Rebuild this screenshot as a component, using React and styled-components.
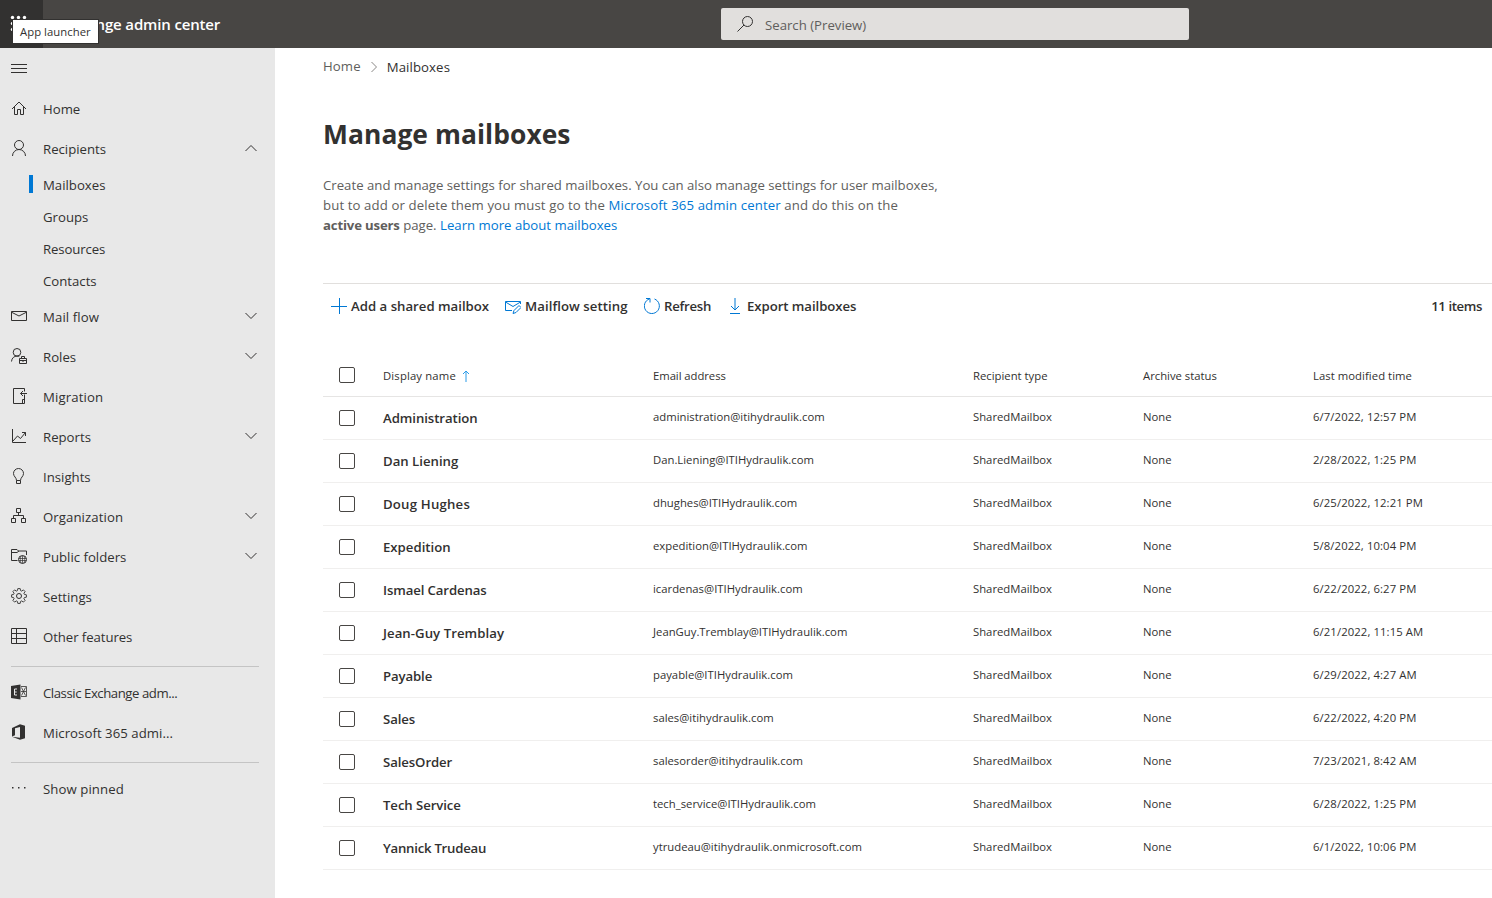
import React from "react";
import styled, { createGlobalStyle } from "styled-components";

const Global = createGlobalStyle`
  *, *::before, *::after { box-sizing: border-box; }
  html, body { margin: 0; padding: 0; background: #fff; }
  body { font-family: "Open Sans", "Noto Sans", sans-serif; font-size: 13.2px; color: #323130; overflow: hidden; }
  a { color: #0078d4; text-decoration: none; }
`;

const Page = styled.div`
  display: flex;
  flex-direction: column;
  width: 1492px;
  height: 898px;
`;

const Header = styled.header`
  position: relative;
  display: flex;
  flex: none;
  height: 48px;
  background: #484644;
`;

const Launcher = styled.div`
  width: 43px;
  height: 48px;
  background: #323130;
  svg { display: block; }
`;

const Brand = styled.div`
  width: 678px;
  padding-left: 11px;
  line-height: 49px;
  font-size: 15px;
  font-weight: 600;
  letter-spacing: -0.15px;
  color: #fff;
  white-space: nowrap;
`;

const Tooltip = styled.div`
  position: absolute;
  left: 12px;
  top: 19px;
  width: 87px;
  height: 25px;
  padding-left: 7px;
  border: 1px solid #323130;
  background: #fff;
  font-size: 11.3px;
  line-height: 24px;
  letter-spacing: 0.05px;
  white-space: nowrap;
  color: #323130;
`;

const Search = styled.div`
  display: flex;
  align-items: center;
  gap: 12px;
  width: 468px;
  height: 32px;
  margin-top: 8px;
  padding: 0 16px;
  border-radius: 2px;
  background: #e1dfdd;
  color: #605e5c;
  span { padding-top: 2px; }
`;

const Body = styled.div`
  display: flex;
  flex: 1;
  min-height: 0;
`;

const Sidebar = styled.nav`
  flex: none;
  width: 275px;
  background: #e8e8e8;
`;

const MenuToggle = styled.div`
  height: 41px;
  padding: 12px 11px;
  svg { display: block; }
`;

const NavRow = styled.div`
  display: flex;
  align-items: center;
  height: 40px;
  padding: 0 18px 0 11px;
  svg { display: block; flex: none; margin-top: -2px; }
`;

const NavLabel = styled.span`
  flex: 1;
  margin-left: 16px;
  white-space: nowrap;
  letter-spacing: ${(p) => p.$track || 0}px;
`;

const SubRow = styled.div`
  display: flex;
  align-items: center;
  height: 32px;
  padding-left: 29px;
  letter-spacing: ${(p) => p.$track || 0}px;
  &::before {
    content: "";
    width: 4px;
    height: 18px;
    margin: -2px 10px 0 0;
    background: ${(p) => (p.$active ? "#0078d4" : "transparent")};
  }
`;

const Divider = styled.div`
  height: 1px;
  margin: 9px 16px 6px 11px;
  background: #c4c4c4;
`;

const Main = styled.main`
  flex: 1;
  min-width: 0;
  padding-left: 48px;
`;

const Crumbs = styled.div`
  display: flex;
  align-items: center;
  gap: 9px;
  height: 38px;
  padding-bottom: 2px;
  color: #605e5c;
  letter-spacing: 0.1px;
  svg { display: block; margin-top: 2px; }
`;

const CurrentCrumb = styled.span`
  padding-top: 2px;
  color: #323130;
`;

const Title = styled.h1`
  margin: 28px 0 0;
  font-size: 26.4px;
  line-height: 40px;
  font-weight: 700;
  letter-spacing: 0.07px;
`;

const Intro = styled.p`
  margin: 21px 0 0;
  height: 108px;
  line-height: 20px;
  color: #605e5c;
  white-space: nowrap;
  b { font-weight: 700; letter-spacing: -0.17px; }
`;

const IntroLine = styled.span`
  display: block;
  letter-spacing: ${(p) => p.$track || 0}px;
`;

const Toolbar = styled.div`
  display: flex;
  align-items: center;
  height: 71px;
  padding: 0 10px 27px 8px;
  border-top: 1px solid #e1dfdd;
  font-weight: 600;
`;

const Command = styled.span`
  display: flex;
  align-items: center;
  gap: 4px;
  width: ${(p) => p.$w}px;
  white-space: nowrap;
  letter-spacing: ${(p) => p.$track || 0}px;
  svg { display: block; flex: none; }
`;

const Count = styled.span`
  margin-left: auto;
  letter-spacing: -0.4px;
`;

const Row = styled.div`
  display: grid;
  grid-template-columns: 60px 270px 320px 170px 170px 1fr;
  align-items: center;
  height: 43px;
  border-bottom: 1px solid ${(p) => (p.$head ? "#e6e5e4" : "#f0efee")};
  font-size: 11.3px;
  white-space: nowrap;
`;

const Check = styled.span`
  width: 16px;
  height: 16px;
  margin-left: 16px;
  border: 1px solid #484644;
  border-radius: 2px;
  background: #fff;
`;

const HeadCell = styled.span`
  display: flex;
  align-items: center;
  gap: 6px;
  padding-top: 1px;
  font-weight: ${(p) => (p.$sorted ? 500 : 400)};
  letter-spacing: ${(p) => p.$track || 0}px;
`;

const Name = styled.span`
  font-size: 13.2px;
  font-weight: 600;
  padding-bottom: 1px;
  letter-spacing: ${(p) => p.$track || 0}px;
`;

const Cell = styled.span`
  padding-bottom: 3px;
  letter-spacing: ${(p) => p.$track || 0}px;
`;

const Icon = ({ children, w = 16, h = 16, color = "#323130", sw = 1 }) => (
  <svg width={w} height={h} viewBox={`0 0 ${w} ${h}`} fill="none" stroke={color} strokeWidth={sw}>
    {children}
  </svg>
);

const Chevron = ({ up }) => (
  <Icon w={12} h={8}>
    <path d={up ? "M.5 7 6 1.5 11.5 7" : "M.5 1 6 6.5 11.5 1"} />
  </Icon>
);

const icons = {
  home: <path d="M1 9 8 2l7 7M3.500 7v7.500h3V9.500h3v5h3V7" />,
  person: <path d="M8 9.500a4.500 4.500 0 1 0 0-9 4.500 4.500 0 0 0 0 9ZM1.500 16A6.500 6.500 0 0 1 8 9.500a6.500 6.500 0 0 1 6.500 6.500" />,
  mail: <path d="M.5 3.500h15v9H.5zM.5 4.200 8 8l7.500-3.800" />,
  roles: <path d="M6 8.100a3.800 3.800 0 1 0 0-7.600 3.800 3.800 0 0 0 0 7.600ZM.5 13.500C.7 10 3.200 8.100 6 8.100c.9 0 1.700.2 2.300.6M8.500 10.500h7v5h-7zM10.500 10.500v-2h3v2M8.500 12.500h7M12 12v2" />,
  migration: <path d="M13.500 3.500v-3h-11v15h11v-9M16 5.500H9.500M12 3 9.500 5.500 12 8M11.500 15.500v-4h2" />,
  reports: <path d="M1.500 1v13.500H15M2 13l4.500-5 3 2.500 5-6M11 4.500h3.500V8" />,
  bulb: <path d="M5.500 12.500C5.500 9.500 2.500 8.500 2.500 5.500a5 5 0 0 1 10 0c0 3-3 4-3 7zM5.500 12.500v3h4v-3" />,
  org: <path d="M5.500.5h4v4h-4zM.5 10.500h4v4h-4zM10.500 10.500h4v4h-4zM7.500 4.500v3M2.500 10.500v-3h10v3" />,
  folder: (
    <>
      <path d="M6.500 12.500h-6v-11H6l1.500 1.500h8V7M.5 4.500H6L8 3" />
      <circle cx="11.500" cy="11.500" r="4" />
      <path d="M7.500 10.500h8M7.500 12.500h8M11.500 7.500v8M10 8c-1 2-1 5 0 7M13 8c1 2 1 5 0 7" strokeWidth=".7" />
    </>
  ),
  gear: (
    <>
      <circle cx="8" cy="8" r="2.500" />
      <path d="M6.800.6h2.400l.4 2 1.100.5 1.700-1.200 1.700 1.700-1.200 1.700.5 1.100 2 .4v2.400l-2 .4-.5 1.100 1.200 1.700-1.700 1.700-1.700-1.200-1.100.5-.4 2H6.800l-.4-2-1.100-.5-1.700 1.200-1.700-1.700 1.200-1.700-.5-1.100-2-.4V6.800l2-.4.5-1.100-1.200-1.700 1.700-1.700 1.700 1.200 1.100-.5z" strokeWidth=".9" />
    </>
  ),
  grid: <path d="M.5.5h15v15H.5zM.5 5.500h15M.5 10.500h15M5.500.5v15" />,
  exchange: (
    <>
      <path d="M0 2 9.500.5v15L0 14z" fill="#323130" stroke="none" />
      <path d="M6 5H3.500v6H6M3.500 8h2.200" stroke="#e8e8e8" />
      <path d="M10 2.500h5.500v10H10M10.500 3.500l4 8M14.500 3.500l-4 8M10 7.500h5" strokeWidth=".8" />
    </>
  ),
  office: <path fill="#323130" stroke="none" d="m1 4 8-3.700 5 1.500v12.500l-5 1.500-8-3 8 1V3L4 4.300v7L1 12.500z" />,
  more: (
    <g fill="#323130" stroke="none">
      <rect x="1" y="7" width="1.500" height="1.500" />
      <rect x="7" y="7" width="1.500" height="1.500" />
      <rect x="13" y="7" width="1.500" height="1.500" />
    </g>
  ),
};

const navTop = [
  ["home", "Home"],
  ["person", "Recipients", "up"],
];
const subItems = [["Mailboxes"], ["Groups"], ["Resources", -0.12], ["Contacts"]];
const navRest = [
  ["mail", "Mail flow", "down", 0.1],
  ["roles", "Roles", "down"],
  ["migration", "Migration", null, 0.12],
  ["reports", "Reports", "down"],
  ["bulb", "Insights"],
  ["org", "Organization", "down", 0.08],
  ["folder", "Public folders", "down"],
  ["gear", "Settings"],
  ["grid", "Other features", null, -0.07],
];
const navLinks = [
  ["exchange", "Classic Exchange adm...", null, -0.45],
  ["office", "Microsoft 365 admi...", null, 0.05],
];

const NavItem = ({ item: [icon, label, arrow, track] }) => (
  <NavRow>
    <Icon>{icons[icon]}</Icon>
    <NavLabel $track={track}>{label}</NavLabel>
    {arrow && <Chevron up={arrow === "up"} />}
  </NavRow>
);

const mailboxes = [
  ["Administration", "administration@itihydraulik.com", "6/7/2022, 12:57 PM", -0.07],
  ["Dan Liening", "Dan.Liening@ITIHydraulik.com", "2/28/2022, 1:25 PM", 0],
  ["Doug Hughes", "dhughes@ITIHydraulik.com", "6/25/2022, 12:21 PM", 0.2],
  ["Expedition", "expedition@ITIHydraulik.com", "5/8/2022, 10:04 PM", 0],
  ["Ismael Cardenas", "icardenas@ITIHydraulik.com", "6/22/2022, 6:27 PM", -0.12],
  ["Jean-Guy Tremblay", "JeanGuy.Tremblay@ITIHydraulik.com", "6/21/2022, 11:15 AM", 0.05],
  ["Payable", "payable@ITIHydraulik.com", "6/29/2022, 4:27 AM", -0.12],
  ["Sales", "sales@itihydraulik.com", "6/22/2022, 4:20 PM", -0.1],
  ["SalesOrder", "salesorder@itihydraulik.com", "7/23/2021, 8:42 AM", -0.1],
  ["Tech Service", "tech_service@ITIHydraulik.com", "6/28/2022, 1:25 PM", -0.08],
  ["Yannick Trudeau", "ytrudeau@itihydraulik.onmicrosoft.com", "6/1/2022, 10:06 PM", -0.25],
];

export default function App() {
  return (
    <Page>
      <Global />
      <Header>
        <Launcher>
          <svg width="43" height="48" fill="#fff">
            {[17.500, 23.500, 29.500].map((y) => [12.500, 18.500, 24.500].map((x) => <circle key={`${x}-${y}`} cx={x} cy={y} r="1.700" />))}
          </svg>
        </Launcher>
        <Brand>Exchange admin center</Brand>
        <Search>
          <Icon color="#323130">
            <circle cx="10.500" cy="5.500" r="5" />
            <path d="M7 9 .5 15.500" />
          </Icon>
          <span>Search (Preview)</span>
        </Search>
        <Tooltip>App launcher</Tooltip>
      </Header>
      <Body>
        <Sidebar>
          <MenuToggle>
            <Icon>
              <path d="M0 4.500h16M0 8.500h16M0 12.500h16" />
            </Icon>
          </MenuToggle>
          {navTop.map((i) => <NavItem key={i[1]} item={i} />)}
          {subItems.map(([s, track], n) => <SubRow key={s} $active={n === 0} $track={track}>{s}</SubRow>)}
          {navRest.map((i) => <NavItem key={i[1]} item={i} />)}
          <Divider />
          {navLinks.map((i) => <NavItem key={i[1]} item={i} />)}
          <Divider />
          <NavItem item={["more", "Show pinned", null, 0.08]} />
        </Sidebar>
        <Main>
          <Crumbs>
            <span>Home</span>
            <Icon w={8} h={12} color="#8a8886">
              <path d="M1.500 1 6.500 6l-5 5" />
            </Icon>
            <CurrentCrumb>Mailboxes</CurrentCrumb>
          </Crumbs>
          <Title>Manage mailboxes</Title>
          <Intro>
            <IntroLine>Create and manage settings for shared mailboxes. You can also manage settings for user mailboxes,</IntroLine>
            <IntroLine $track={0.11}>but to add or delete them you must go to the <a>Microsoft 365 admin center</a> and do this on the</IntroLine>
            <IntroLine><b>active users</b> page. <a>Learn more about mailboxes</a></IntroLine>
          </Intro>
          <Toolbar>
            <Command $w={174}>
              <Icon color="#0078d4"><path d="M0 8.500h16M8.500 0v16" /></Icon>
              Add a shared mailbox
            </Command>
            <Command $w={139} $track={0.06}>
              <Icon color="#0078d4"><path d="M7 12.500H.5v-9h15V6M.5 4 8 8.500 15.500 4M8 15.500l1-3 5-5 2 2-5 5z" /></Icon>
              Mailflow setting
            </Command>
            <Command $w={83} $track={-0.25}>
              <Icon color="#0078d4"><path d="M10.500 1a7.500 7.500 0 1 1-5-.1M2 .5h4v4" /></Icon>
              Refresh
            </Command>
            <Command $w={140} $track={-0.06}>
              <Icon color="#0078d4"><path d="M8 0v12M4 8l4 4 4-4M3 15.500h10" /></Icon>
              Export mailboxes
            </Command>
            <Count>11 items</Count>
          </Toolbar>
          <Row $head>
            <Check />
            <HeadCell $sorted $track={0.15}>
              Display name
              <Icon w={8} h={12} color="#2b9be8"><path d="M4 12V1M1 4l3-3 3 3" /></Icon>
            </HeadCell>
            <HeadCell $track={-0.05}>Email address</HeadCell>
            <HeadCell>Recipient type</HeadCell>
            <HeadCell>Archive status</HeadCell>
            <HeadCell $track={0.05}>Last modified time</HeadCell>
          </Row>
          {mailboxes.map(([name, email, time, track]) => (
            <Row key={name}>
              <Check />
              <Name $track={track}>{name}</Name>
              <Cell>{email}</Cell>
              <Cell>SharedMailbox</Cell>
              <Cell>None</Cell>
              <Cell $track={0.1}>{time}</Cell>
            </Row>
          ))}
        </Main>
      </Body>
    </Page>
  );
}
